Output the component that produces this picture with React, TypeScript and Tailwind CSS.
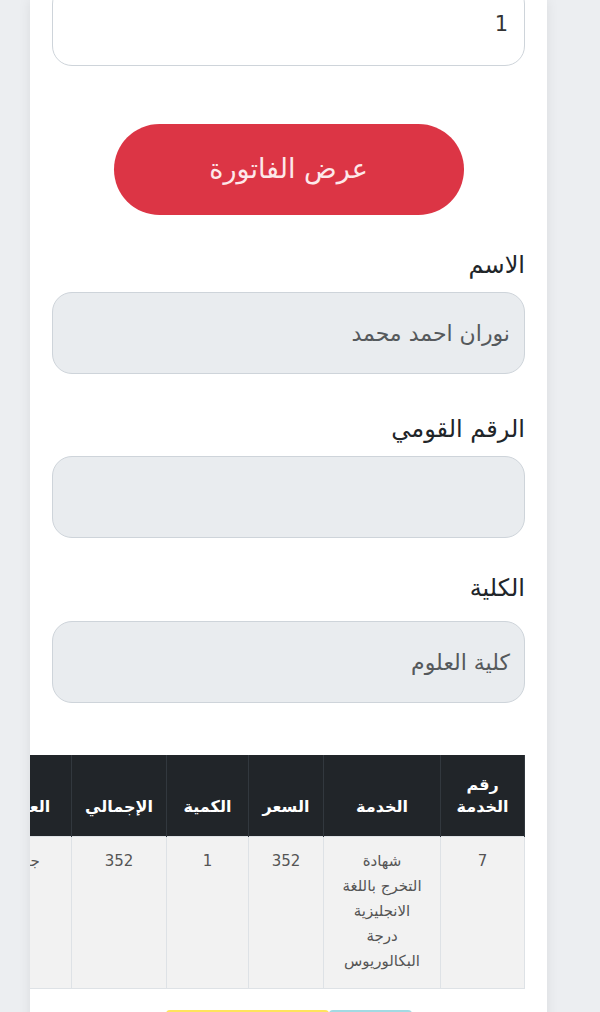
import React from 'react'

const FONT = { fontFamily: '"DejaVu Sans", "Noto Sans", sans-serif' }

function Label({ children }: { children: React.ReactNode }) {
  return <div className="text-[24px] leading-8 text-[#212529]">{children}</div>
}

function ReadOnly({ value }: { value?: string }) {
  return (
    <div className="flex h-[82px] items-center rounded-[20px] border border-[#ced4da] bg-[#e9ecef] pr-[14px] text-[22px] text-[#55595c]">
      {value}
    </div>
  )
}

const HEAD = ['رقم الخدمة', 'الخدمة', 'السعر', 'الكمية', 'الإجمالي', 'العملة']
const WIDTHS = ['w-[84px]', 'w-[117px]', 'w-[75px]', 'w-[82px]', 'w-[95px]', 'w-[90px]']

export default function App() {
  const service = ['شهادة', 'التخرج باللغة', 'الانجليزية', 'درجة', 'البكالوريوس']
  const row: React.ReactNode[] = [
    '7',
    service.map((l) => <div key={l}>{l}</div>),
    '352',
    '1',
    '352',
    'جنيه',
  ]

  return (
    <div dir="rtl" className="min-h-[1012px] bg-[#eceef1]" style={FONT}>
      <div className="ml-[30px] mr-[53px] overflow-hidden bg-white shadow-[0_0_12px_rgba(0,0,0,0.08)]">
        <div className="px-[22px] pb-10">
          <div className="-mt-4 flex h-[82px] items-center rounded-[20px] border border-[#ced4da] bg-white pr-[16px] text-[21px] text-[#333]">
            1
          </div>

          <div className="mt-[58px] flex justify-center">
            <button className="flex h-[91px] w-[350px] items-center justify-center rounded-full bg-[#dc3545] text-[27px] text-[#fde8ea]">
              عرض الفاتورة
            </button>
          </div>

          <div className="mt-[34px]">
            <Label>الاسم</Label>
          </div>
          <div className="mt-[11px]">
            <ReadOnly value="نوران احمد محمد" />
          </div>

          <div className="mt-[39px]">
            <Label>الرقم القومي</Label>
          </div>
          <div className="mt-[11px]">
            <ReadOnly />
          </div>

          <div className="mt-[34px]">
            <Label>الكلية</Label>
          </div>
          <div className="mt-[17px]">
            <ReadOnly value="كلية العلوم" />
          </div>

          <div className="mt-[52px]">
            <table className="w-[543px] max-w-none table-fixed border-collapse text-center text-[15px]">
              <thead>
                <tr className="h-[81px] bg-[#212529] text-white">
                  {HEAD.map((h, i) => (
                    <th
                      key={h}
                      className={`${WIDTHS[i]} border-x border-[#32383e] px-2 pb-[18px] align-bottom text-[16px] font-bold leading-[22px]`}
                    >
                      {h}
                    </th>
                  ))}
                </tr>
              </thead>
              <tbody>
                <tr className="bg-[#f2f2f2] text-[#555]">
                  {row.map((c, i) => (
                    <td
                      key={i}
                      className="h-[152px] border border-[#dee2e6] px-1 pt-[12px] align-top leading-[25px]"
                    >
                      {c}
                    </td>
                  ))}
                </tr>
              </tbody>
            </table>
          </div>

          <div className="mt-[21px] flex justify-center">
            <div className="h-[40px] w-[83px] rounded-t bg-[#17a2b8]/40" />
            <div className="h-[40px] w-[163px] rounded-t bg-[#ffe45c]" />
          </div>
        </div>
      </div>
    </div>
  )
}
